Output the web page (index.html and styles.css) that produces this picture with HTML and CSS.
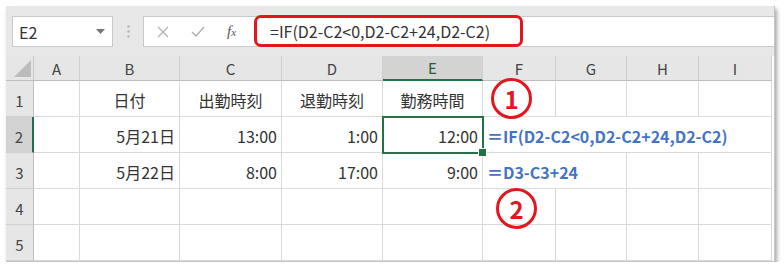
FILE: index.html
```html
<!DOCTYPE html>
<html lang="ja">
<head>
  <meta charset="UTF-8" />
  <title>勤務時間</title>
  <link rel="stylesheet" href="styles.css">
</head>
<body>
  <div class="window">
    <div class="toolbar">
      <div class="name-box">
        <span>E2</span>
        <svg class="drop" width="9" height="5" viewBox="0 0 9 5"><path d="M0 0h9L4.5 5z" fill="#777"/></svg>
      </div>
      <div class="sep">
        <svg width="3" height="13" viewBox="0 0 3 13"><circle cx="1.5" cy="1.5" r="1.2" fill="#b5b5b5"/><circle cx="1.5" cy="6.5" r="1.2" fill="#b5b5b5"/><circle cx="1.5" cy="11.5" r="1.2" fill="#b5b5b5"/></svg>
      </div>
      <div class="formula-bar">
        <div class="fx-buttons">
          <svg width="12" height="12" viewBox="0 0 12 12"><path d="M1 1l10 10M11 1L1 11" stroke="#b3b3b3" stroke-width="1.3"/></svg>
          <svg width="14" height="11" viewBox="0 0 14 11"><path d="M1 6l4 4 8-9" stroke="#b3b3b3" stroke-width="1.5" fill="none"/></svg>
          <span class="fx">f<span class="fx-x">x</span></span>
        </div>
        <div class="formula-input">
          <span class="formula-mark">=IF(D2-C2&lt;0,D2-C2+24,D2-C2)</span>
        </div>
      </div>
    </div>

    <div class="grid">
      <div class="corner"><span class="tri"></span></div>
      <div class="col-head">A</div>
      <div class="col-head">B</div>
      <div class="col-head">C</div>
      <div class="col-head">D</div>
      <div class="col-head active">E</div>
      <div class="col-head">F</div>
      <div class="col-head">G</div>
      <div class="col-head">H</div>
      <div class="col-head">I</div>

      <div class="row-head">1</div>
      <div class="cell"></div>
      <div class="cell center">日付</div>
      <div class="cell center">出勤時刻</div>
      <div class="cell center">退勤時刻</div>
      <div class="cell center">勤務時間</div>
      <div class="cell"></div>
      <div class="cell"></div>
      <div class="cell"></div>
      <div class="cell"></div>

      <div class="row-head active">2</div>
      <div class="cell"></div>
      <div class="cell right">5月21日</div>
      <div class="cell right">13:00</div>
      <div class="cell right">1:00</div>
      <div class="cell right selected">12:00</div>
      <div class="cell note span4">＝IF(D2-C2&lt;0,D2-C2+24,D2-C2)</div>

      <div class="row-head">3</div>
      <div class="cell"></div>
      <div class="cell right">5月22日</div>
      <div class="cell right">8:00</div>
      <div class="cell right">17:00</div>
      <div class="cell right">9:00</div>
      <div class="cell note span2">＝D3-C3+24</div>
      <div class="cell"></div>
      <div class="cell"></div>

      <div class="row-head">4</div>
      <div class="cell"></div><div class="cell"></div><div class="cell"></div><div class="cell"></div><div class="cell"></div>
      <div class="cell"></div><div class="cell"></div><div class="cell"></div><div class="cell"></div>

      <div class="row-head">5</div>
      <div class="cell"></div><div class="cell"></div><div class="cell"></div><div class="cell"></div><div class="cell"></div>
      <div class="cell"></div><div class="cell"></div><div class="cell"></div><div class="cell"></div>
    </div>

    <div class="circle c1">1</div>
    <div class="circle c2">2</div>
  </div>
</body>
</html>
```

FILE: styles.css
```css
* {
  box-sizing: border-box;
}

body {
  margin: 0;
  background-color: #ffffff;
  font-family: "Noto Sans CJK JP", "Noto Sans", sans-serif;
  color: #333;
}

.window {
  position: relative;
  margin: 6px 0 0 6px;
  width: 769px;
  background-color: #fff;
  border-right: 1px solid #c4c4c4;
  border-bottom: 1px solid #c4c4c4;
  box-shadow: 2px 3px 4px rgba(0,0,0,0.35);
}

.toolbar {
  display: flex;
  align-items: flex-start;
  height: 50px;
  padding: 10px 0 0 6px;
  background-color: #e8e8e8;
}

.name-box {
  width: 101px;
  height: 31px;
  background-color: #fff;
  border: 1px solid #c9c9c9;
  display: flex;
  align-items: center;
  justify-content: space-between;
  padding: 0 7px 0 6px;
  font-size: 16px;
  color: #333;
}

.sep {
  width: 30px;
  height: 31px;
  display: flex;
  align-items: center;
  justify-content: center;
}

.formula-bar {
  flex: 1;
  height: 31px;
  background-color: #fff;
  border: 1px solid #c9c9c9;
  border-right: none;
  display: flex;
  align-items: center;
}

.fx-buttons {
  width: 110px;
  display: flex;
  align-items: center;
  gap: 22px;
  padding-left: 13px;
}

.fx {
  font-family: "Liberation Serif", serif;
  font-style: italic;
  font-size: 15px;
  color: #555;
}

.fx-x {
  font-size: 11px;
}

.formula-input {
  flex: 1;
  height: 100%;
}

.formula-mark {
  display: flex;
  align-items: center;
  width: 269px;
  height: 32px;
  margin-top: -2px;
  padding-left: 13px;
  border: 3px solid #e3151d;
  border-radius: 7px;
  font-size: 16px;
  color: #333;
  white-space: nowrap;
}

.grid {
  display: grid;
  grid-template-columns: 28px 46px 100px 102px 101px 100px 73px 71px 72px 73px;
  grid-template-rows: 25px repeat(5, 36px);
  padding-right: 3px;
}

.corner {
  position: relative;
  background-color: #e6e6e6;
  border-right: 1px solid #c6c6c6;
  border-bottom: 1px solid #bdbdbd;
}

.tri {
  position: absolute;
  right: 2px;
  bottom: 3px;
  width: 0;
  height: 0;
  border-left: 17px solid transparent;
  border-bottom: 17px solid #bcbcbc;
}

.col-head {
  background-color: #e6e6e6;
  border-right: 1px solid #cfcfcf;
  border-bottom: 1px solid #bdbdbd;
  display: flex;
  align-items: center;
  justify-content: center;
  font-size: 15px;
  color: #444;
}

.col-head.active {
  background-color: #d3d3d3;
  border-bottom: 2px solid #217346;
  color: #255b3b;
}

.row-head {
  background-color: #e6e6e6;
  border-right: 1px solid #bdbdbd;
  border-bottom: 1px solid #cfcfcf;
  display: flex;
  align-items: center;
  justify-content: center;
  padding-top: 4px;
  font-size: 15px;
  color: #444;
}

.row-head.active {
  background-color: #d3d3d3;
  border-right: 2px solid #217346;
}

.cell {
  border-right: 1px solid #d9d9d9;
  border-bottom: 1px solid #d9d9d9;
  display: flex;
  align-items: center;
  padding: 2px 4px 0;
  font-size: 16px;
  color: #333;
  white-space: nowrap;
}

.center {
  justify-content: center;
}

.right {
  justify-content: flex-end;
}

.selected {
  position: relative;
  z-index: 2;
  outline: 2px solid #217346;
  outline-offset: -1px;
}

.selected::after {
  content: "";
  position: absolute;
  right: -5px;
  bottom: -5px;
  width: 7px;
  height: 7px;
  background-color: #217346;
  border: 1px solid #fff;
}

.note {
  padding-left: 4px;
  font-weight: bold;
  font-size: 16px;
  color: #4472c4;
}

.span4 {
  grid-column: span 4;
}

.span2 {
  grid-column: span 2;
}

.circle {
  position: absolute;
  width: 41px;
  height: 41px;
  border: 3px solid #e3151d;
  border-radius: 50%;
  display: flex;
  align-items: center;
  justify-content: center;
  font-size: 24px;
  font-weight: bold;
  color: #e3151d;
}

.c1 {
  left: 485px;
  top: 72px;
}

.c2 {
  left: 490px;
  top: 182px;
}
```
